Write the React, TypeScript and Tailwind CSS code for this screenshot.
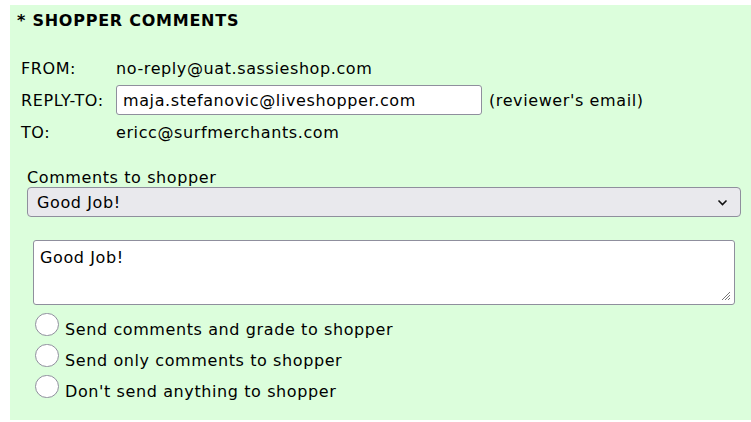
import React from "react";

export default function App() {
  const font = { fontFamily: '"DejaVu Sans", Verdana, sans-serif' };
  return (
    <div className="bg-white w-[751px] h-[422px] overflow-hidden pt-[5px] pl-[10px] text-black tracking-[0.6px]" style={font}>
      <div className="bg-[#dcfedc] h-[415px] w-[741px]">
        <div className="pl-[7px] pt-[6px] h-[30px] text-[16px] font-bold leading-[20px] tracking-[0.75px]">* SHOPPER COMMENTS</div>
        <div className="pl-[11px] pt-[18px] text-[16px]">
          <div className="grid grid-cols-[95px_1fr] items-center">
            <div className="h-[32px] leading-[32px]">FROM:</div>
            <div className="h-[32px] leading-[32px]">no-reply@uat.sassieshop.com</div>
            <div className="h-[32px] leading-[32px]">REPLY-TO:</div>
            <div className="h-[32px] flex items-center gap-[7px] -mt-[2px]">
              <input
                readOnly
                value="maja.stefanovic@liveshopper.com"
                className="w-[366px] h-[30px] bg-white border border-[#8f8f9d] rounded-[3px] px-[6px] text-[16px] outline-none tracking-[0.6px]"
                style={font}
              />
              <span className="mt-[2px]">(reviewer's email)</span>
            </div>
            <div className="h-[32px] leading-[32px]">TO:</div>
            <div className="h-[32px] leading-[32px]">ericc@surfmerchants.com</div>
          </div>
        </div>
        <div className="pl-[17px] pt-[18px] text-[16px]">
          <div className="leading-[20px] h-[20px] pt-[1px]">Comments to shopper</div>
          <div className="w-[714px] h-[30px] bg-[#e9e9ed] border border-[#8f8f9d] rounded-[4px] flex items-center justify-between pl-[9px] pr-[12px]">
            <span className="mt-[1px]">Good Job!</span>
            <svg width="11" height="7" viewBox="0 0 11 7" fill="none">
              <path d="M1.5 1.5 L5.5 5.5 L9.5 1.5" stroke="#111" strokeWidth="1.6" />
            </svg>
          </div>
        </div>
        <div className="pl-[23px] pt-[23px] text-[16px]">
          <div className="relative w-[702px] h-[65px] bg-white border border-[#8f8f9d] rounded-[3px] px-[6px] pt-[5px]">
            <span>Good Job!</span>
            <svg className="absolute right-[3px] bottom-[3px]" width="12" height="12" viewBox="0 0 12 12">
              <path d="M11 3 L3 11 M11 6 L6 11 M11 9 L9 11" stroke="#777" strokeWidth="1" />
            </svg>
          </div>
        </div>
        <div className="pl-[25px] pt-[8px] text-[16px]">
          {["Send comments and grade to shopper", "Send only comments to shopper", "Don't send anything to shopper"].map((t) => (
            <div key={t} className="flex items-start h-[31px]">
              <span className="w-[24px] h-[23px] rounded-full border border-[#8f8f9d] bg-white" />
              <span className="ml-[6px] mt-[7px] leading-[20px]">{t}</span>
            </div>
          ))}
        </div>
      </div>
    </div>
  );
}
